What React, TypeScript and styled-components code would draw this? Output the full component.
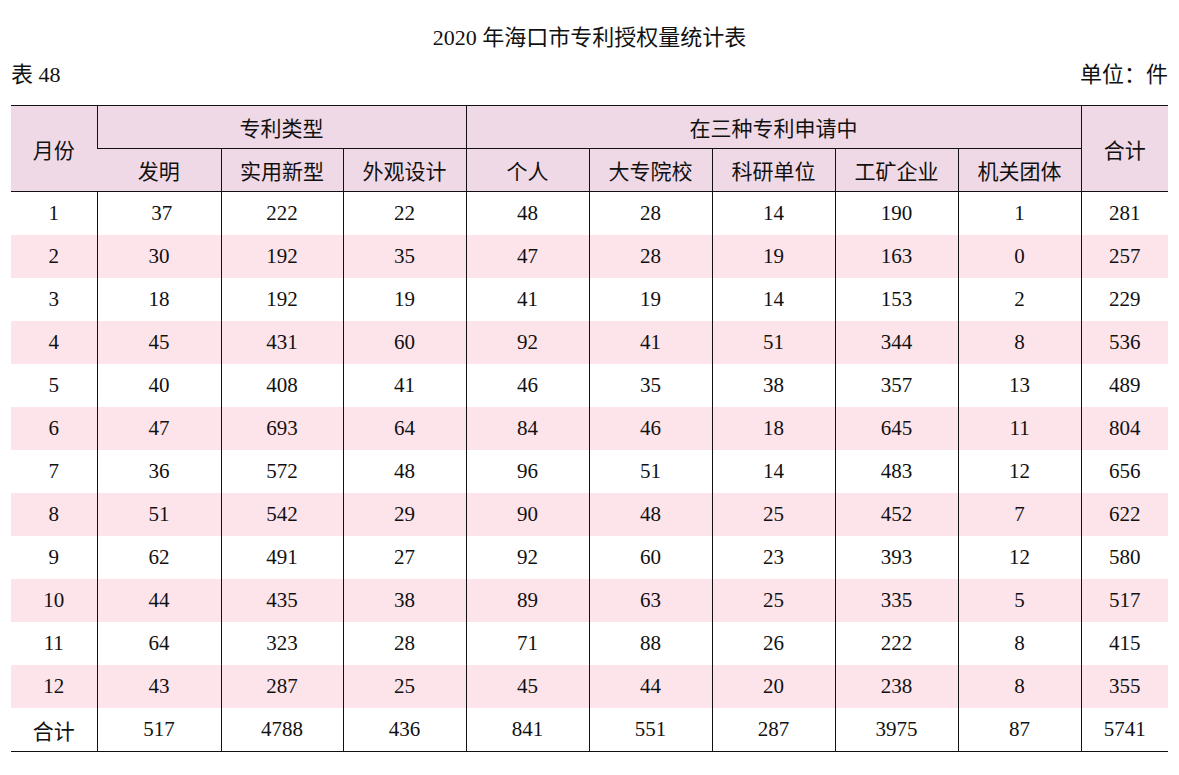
import React from 'react'
import styled, { createGlobalStyle } from 'styled-components'

const GlobalStyle = createGlobalStyle`
  html, body {
    margin: 0;
    padding: 0;
    background: #fff;
  }
  body {
    font-family: "Liberation Serif", "Noto Sans CJK SC", serif;
    color: #111;
  }
`

const Page = styled.div`
  width: 1179px;
  padding: 0 11px;
  box-sizing: border-box;
`

const Title = styled.h1`
  margin: 24px 0 0;
  height: 28px;
  line-height: 28px;
  font-size: 22px;
  font-weight: normal;
  text-align: center;
`

const Caption = styled.div`
  display: flex;
  justify-content: space-between;
  align-items: center;
  height: 30px;
  margin-top: 5px;
  margin-bottom: 18px;
  font-size: 22px;
`

const Table = styled.table`
  width: 1157px;
  border-collapse: collapse;
  table-layout: fixed;
  font-size: 21px;
`

const HeadCell = styled.th<{ $top?: boolean }>`
  height: 42px;
  padding: 0;
  background: #f0d9e6;
  font-weight: normal;
  text-align: center;
  border-left: 1px solid #111;
  border-bottom: 1px solid #111;
  border-top: ${p => (p.$top ? '1.5px solid #111' : 'none')};
  &:first-child {
    border-left: none;
  }
`

const Row = styled.tr<{ $striped: boolean }>`
  background: ${p => (p.$striped ? '#fde4eb' : '#fff')};
`

const Cell = styled.td<{ $last?: boolean }>`
  height: 43px;
  padding: 0;
  text-align: center;
  white-space: pre;
  border-left: 1px solid #111;
  border-bottom: ${p => (p.$last ? '1.5px solid #111' : 'none')};
  &:first-child {
    border-left: none;
  }
`

const widths = [86, 124, 122, 123, 123, 123, 123, 123, 123, 87]

const rows: (string | number)[][] = [
  [1, ' 37', 222, 22, 48, 28, 14, 190, 1, 281],
  [2, 30, 192, 35, 47, 28, 19, 163, 0, 257],
  [3, 18, 192, 19, 41, 19, 14, 153, 2, 229],
  [4, 45, 431, 60, 92, 41, 51, 344, 8, 536],
  [5, 40, 408, 41, 46, 35, 38, 357, 13, 489],
  [6, 47, 693, 64, 84, 46, 18, 645, 11, 804],
  [7, 36, 572, 48, 96, 51, 14, 483, 12, 656],
  [8, 51, 542, 29, 90, 48, 25, 452, 7, 622],
  [9, 62, 491, 27, 92, 60, 23, 393, 12, 580],
  [10, 44, 435, 38, 89, 63, 25, 335, 5, 517],
  [11, 64, 323, 28, 71, 88, 26, 222, 8, 415],
  [12, 43, 287, 25, 45, 44, 20, 238, 8, 355],
  ['合计', 517, 4788, 436, 841, 551, 287, 3975, 87, 5741],
]

const subHeads = ['发明', '实用新型', '外观设计', '个人', '大专院校', '科研单位', '工矿企业', '机关团体']

export default function App() {
  return (
    <>
      <GlobalStyle />
      <Page>
        <Title>2020 年海口市专利授权量统计表</Title>
        <Caption>
          <span>表 48</span>
          <span>单位：件</span>
        </Caption>
        <Table>
          <colgroup>
            {widths.map((w, i) => (
              <col key={i} style={{ width: w }} />
            ))}
          </colgroup>
          <thead>
            <tr>
              <HeadCell $top rowSpan={2}>月份</HeadCell>
              <HeadCell $top colSpan={3}>专利类型</HeadCell>
              <HeadCell $top colSpan={5}>在三种专利申请中</HeadCell>
              <HeadCell $top rowSpan={2}>合计</HeadCell>
            </tr>
            <tr>
              {subHeads.map(h => (
                <HeadCell key={h}>{h}</HeadCell>
              ))}
            </tr>
          </thead>
          <tbody>
            {rows.map((r, i) => (
              <Row key={i} $striped={i % 2 === 1}>
                {r.map((v, j) => (
                  <Cell key={j} $last={i === rows.length - 1}>
                    {v}
                  </Cell>
                ))}
              </Row>
            ))}
          </tbody>
        </Table>
      </Page>
    </>
  )
}
